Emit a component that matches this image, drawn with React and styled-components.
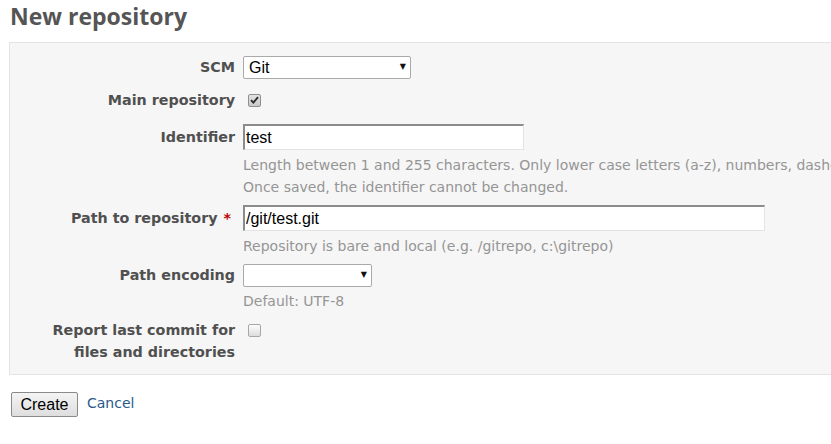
import React from 'react';
import styled, { createGlobalStyle } from 'styled-components';

const GlobalStyle = createGlobalStyle`
  html, body {
    margin: 0;
    padding: 0;
    background: #fff;
  }
  body {
    width: 831px;
    height: 444px;
    overflow: hidden;
    font-family: "DejaVu Sans", Verdana, sans-serif;
    font-size: 13px;
    color: #484848;
  }
`;

const Page = styled.div`
  padding: 0 0 0 9px;
`;

const Title = styled.h2`
  margin: 0;
  padding: 1px 0 0 1px;
  height: 42px;
  box-sizing: border-box;
  font-family: "Open Sans", "DejaVu Sans", sans-serif;
  font-weight: 700;
  font-size: 23px;
  line-height: 30px;
  color: #555;
`;

const Box = styled.div`
  width: 900px;
  box-sizing: border-box;
  background: #f6f6f6;
  border: 1px solid #e4e4e4;
  padding: 13px 0 11px 0;
`;

const Field = styled.div`
  display: grid;
  grid-template-columns: 225px 1fr;
  column-gap: 8px;
  align-items: start;
  margin-top: ${p => p.$top || 0}px;
`;

const Label = styled.label`
  text-align: right;
  font-weight: 700;
  font-size: 14.3px;
  color: #505050;
  line-height: ${p => p.$lh || 22}px;
  white-space: nowrap;
`;

const Required = styled.span`
  color: #bb0000;
  margin: 0 4px 0 6px;
`;

const Control = styled.div`
  display: flex;
  flex-direction: column;
  align-items: flex-start;
`;

const TextInput = styled.input`
  box-sizing: border-box;
  width: ${p => p.$width}px;
  height: 26px;
  margin: 0;
  padding: 0 0 0 1px;
  background: #fff;
  border-top: 2px solid #8c8c8c;
  border-left: 2px solid #8c8c8c;
  border-right: 1px solid #e3e3e3;
  border-bottom: 1px solid #e3e3e3;
  font-family: "Liberation Sans", Arial, sans-serif;
  font-size: 16px;
  color: #000;
  outline: none;
`;

const SelectWrap = styled.div`
  position: relative;
  width: ${p => p.$width}px;
  height: 23px;
`;

const Select = styled.select`
  appearance: none;
  box-sizing: border-box;
  width: 100%;
  height: 23px;
  margin: 0;
  padding: 0 0 0 5px;
  background: #fff;
  border: 1px solid #a9a9a9;
  border-radius: 2px;
  font-family: "Liberation Sans", Arial, sans-serif;
  font-size: 16px;
  color: #000;
  outline: none;
`;

const Arrow = styled.span`
  position: absolute;
  right: 5px;
  top: 6px;
  font-size: 8px;
  line-height: 10px;
  color: #111;
  pointer-events: none;
`;

const CheckWrap = styled.span`
  display: flex;
  align-items: center;
  height: ${p => p.$h || 22}px;
  padding-left: 5px;
`;

const CheckBox = styled.span`
  box-sizing: border-box;
  width: 13px;
  height: 13px;
  border: 1px solid ${p => (p.$checked ? '#8f8f8f' : '#a6a6a6')};
  border-radius: 2px;
  background: ${p =>
    p.$checked
      ? 'linear-gradient(#e2e2e2, #c9c9c9)'
      : 'linear-gradient(#fdfdfd, #dcdcdc)'};
  display: flex;
  align-items: center;
  justify-content: center;
`;

const Hint = styled.em`
  display: block;
  font-style: normal;
  font-size: 14px;
  line-height: 22px;
  color: #959595;
  white-space: nowrap;
  margin-top: ${p => p.$top || 0}px;
`;

const Actions = styled.div`
  display: flex;
  align-items: center;
  gap: 9px;
  margin-top: 17px;
  padding-left: 2px;
`;

const Button = styled.button`
  box-sizing: border-box;
  width: 67px;
  height: 25px;
  margin: 0;
  padding: 0;
  border: 1px solid #8a8a8a;
  border-radius: 2px;
  background: linear-gradient(#f4f4f4, #dedede);
  font-family: "Liberation Sans", Arial, sans-serif;
  font-size: 16px;
  color: #000;
`;

const CancelLink = styled.a`
  font-size: 14px;
  color: #2a5a8a;
  text-decoration: none;
  margin-top: -4px;
`;

const Check = ({ checked, h }) => (
  <CheckWrap $h={h}>
    <CheckBox $checked={checked}>
      {checked && (
        <svg width="9" height="8" viewBox="0 0 9 8">
          <path d="M1 4.2 L3.4 6.6 L8 1.2" fill="none" stroke="#2b2b2b" strokeWidth="1.9" />
        </svg>
      )}
    </CheckBox>
  </CheckWrap>
);

export default function App() {
  return (
    <Page>
      <GlobalStyle />
      <Title>New repository</Title>
      <Box>
        <Field>
          <Label $lh={23}>SCM</Label>
          <Control>
            <SelectWrap $width={168}>
              <Select defaultValue="Git">
                <option>Git</option>
              </Select>
              <Arrow>▼</Arrow>
            </SelectWrap>
          </Control>
        </Field>
        <Field $top={11}>
          <Label $lh={20}>Main repository</Label>
          <Check checked h={20} />
        </Field>
        <Field $top={14}>
          <Label $lh={26}>Identifier</Label>
          <Control>
            <TextInput $width={281} defaultValue="test" />
            <Hint $top={4}>
              Length between 1 and 255 characters. Only lower case letters (a-z), numbers, dashes and underscores are allowed.
            </Hint>
            <Hint>Once saved, the identifier cannot be changed.</Hint>
          </Control>
        </Field>
        <Field $top={7}>
          <Label $lh={26}>
            Path to repository<Required>*</Required>
          </Label>
          <Control>
            <TextInput $width={522} defaultValue="/git/test.git" />
            <Hint $top={4}>Repository is bare and local (e.g. /gitrepo, c:\gitrepo)</Hint>
          </Control>
        </Field>
        <Field $top={7}>
          <Label $lh={23}>Path encoding</Label>
          <Control>
            <SelectWrap $width={129}>
              <Select defaultValue="">
                <option value=""></option>
              </Select>
              <Arrow>▼</Arrow>
            </SelectWrap>
            <Hint $top={3}>Default: UTF-8</Hint>
          </Control>
        </Field>
        <Field $top={7}>
          <Label $lh={22}>
            Report last commit for
            <br />
            files and directories
          </Label>
          <Check h={22} />
        </Field>
      </Box>
      <Actions>
        <Button>Create</Button>
        <CancelLink href="#">Cancel</CancelLink>
      </Actions>
    </Page>
  );
}
